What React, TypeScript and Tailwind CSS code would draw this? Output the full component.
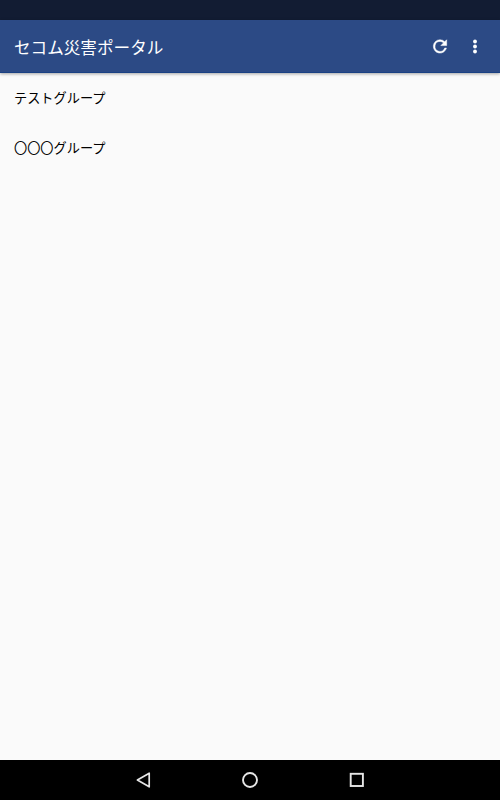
const groups = [
  { id: 1, name: "テストグループ" },
  { id: 2, name: "〇〇〇グループ" },
];

const AppBar = () => (
  <header className="relative flex h-[53px] shrink-0 items-center border-b border-[#1a4183] bg-[#2c4a85] pl-3.5 text-white shadow-[0_1px_3px_rgba(0,0,0,0.35)]">
    <h1 className="flex-1 pt-px text-[16.6px] leading-6">セコム災害ポータル</h1>
    <button className="flex h-full w-9 items-center justify-center" aria-label="更新">
      <svg width="20" height="20" viewBox="0 0 24 24" fill="currentColor" stroke="currentColor" strokeWidth="0.6">
        <path d="M17.65 6.85A7.96 7.96 0 0 0 12 4.5a8 8 0 1 0 7.73 10h-2.08A6 6 0 1 1 12 6.5c1.66 0 3.14.69 4.22 1.78L13 11.5h7v-7z" />
      </svg>
    </button>
    <button className="mr-2 flex h-full w-[34px] items-center justify-center" aria-label="メニュー">
      <svg width="20" height="20" viewBox="0 0 20 20" fill="currentColor">
        <circle cx="10" cy="5.5" r="1.9" />
        <circle cx="10" cy="10.5" r="1.9" />
        <circle cx="10" cy="15.5" r="1.9" />
      </svg>
    </button>
  </header>
);

const NavBar = () => (
  <nav className="flex h-10 shrink-0 items-center justify-center gap-[83px] bg-black">
    <svg width="24" height="24" viewBox="0 0 24 24" fill="none" stroke="#e6e6e6" strokeWidth="1.7" strokeLinejoin="round">
      <path d="M18.2 5.2v13.6L6.4 12z" />
    </svg>
    <svg width="24" height="24" viewBox="0 0 24 24" fill="none" stroke="#e6e6e6" strokeWidth="1.9">
      <circle cx="12" cy="12" r="7" />
    </svg>
    <svg width="24" height="24" viewBox="0 0 24 24" fill="none" stroke="#e6e6e6" strokeWidth="1.9">
      <rect x="5.7" y="5.8" width="12.2" height="12.2" />
    </svg>
  </nav>
);

const App = () => {
  return (
    <div className="flex h-screen flex-col overflow-hidden bg-[#fafafa] font-['Noto_Sans_CJK_JP',sans-serif]">
      <div className="h-5 shrink-0 bg-[#121c33]" />
      <AppBar />
      <ul className="flex-1">
        {groups.map((group) => (
          <li key={group.id} className="flex h-[50px] items-center pl-3.5 text-[13.2px] text-black">
            {group.name}
          </li>
        ))}
      </ul>
      <NavBar />
    </div>
  );
};

export default App;
